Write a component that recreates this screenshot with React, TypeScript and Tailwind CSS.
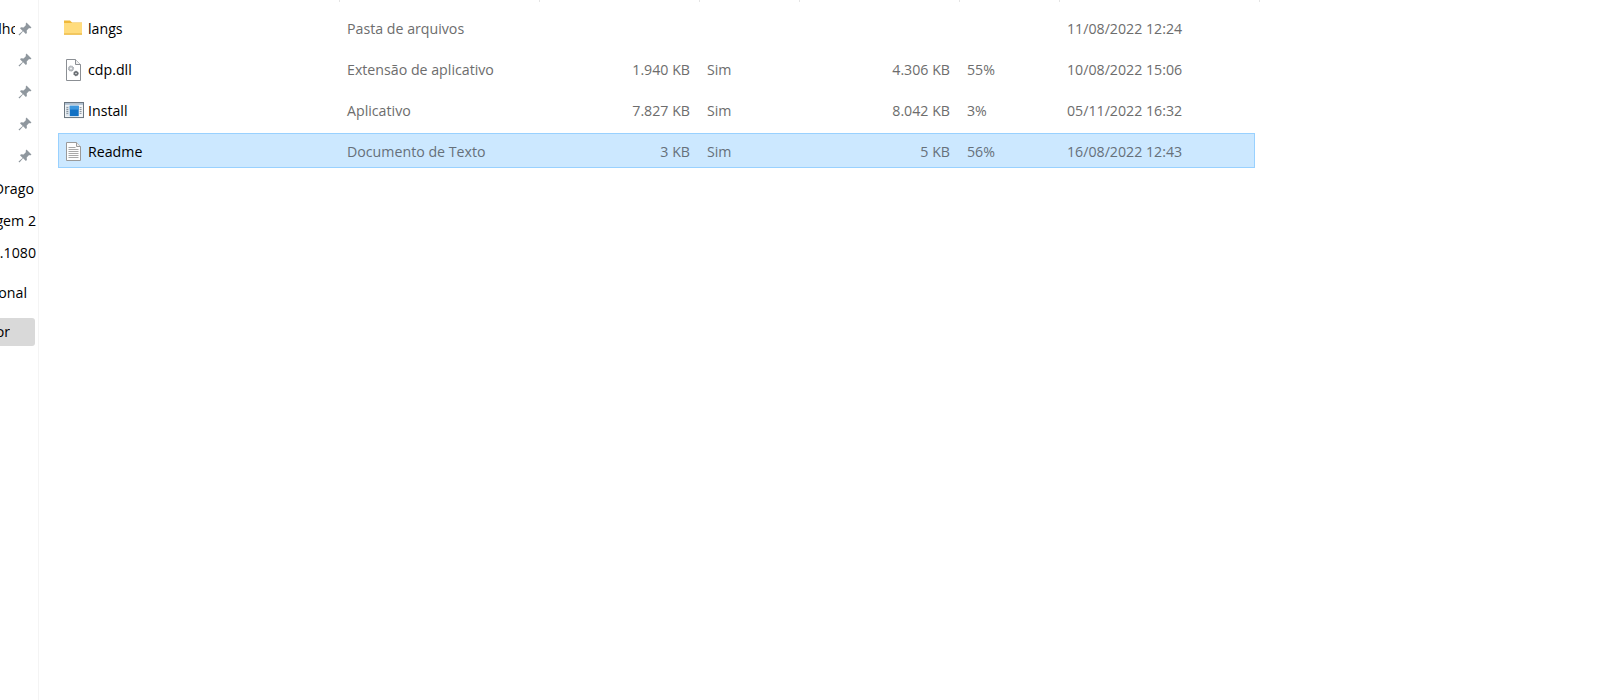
import React from 'react'

const gridCols = 'grid grid-cols-[282px_200px_160px_100px_160px_100px_200px]'

const files = [
  { name: 'langs', icon: 'folder', type: 'Pasta de arquivos', size: '', comp: '', packed: '', ratio: '', date: '11/08/2022 12:24' },
  { name: 'cdp.dll', icon: 'dll', type: 'Extensão de aplicativo', size: '1.940 KB', comp: 'Sim', packed: '4.306 KB', ratio: '55%', date: '10/08/2022 15:06' },
  { name: 'Install', icon: 'exe', type: 'Aplicativo', size: '7.827 KB', comp: 'Sim', packed: '8.042 KB', ratio: '3%', date: '05/11/2022 16:32' },
  { name: 'Readme', icon: 'txt', type: 'Documento de Texto', size: '3 KB', comp: 'Sim', packed: '5 KB', ratio: '56%', date: '16/08/2022 12:43' },
]

function FileIcon({ kind }: { kind: string }) {
  if (kind === 'folder') {
    return (
      <svg width="20" height="18" viewBox="1 1 20 18">
        <path d="M1 2.5h6l2 2h10v12H1z" fill="#f0b93a" />
        <rect x="1" y="5" width="18" height="11.5" fill="#ffdc7d" />
        <rect x="1" y="15.5" width="18" height="1" fill="#e8b23c" />
      </svg>
    )
  }
  if (kind === 'dll') {
    return (
      <svg width="20" height="24" viewBox="1 0 20 24">
        <path d="M3.5 1.5h9l5 5v16h-14z" fill="#fff" stroke="#8b8f94" />
        <path d="M12.5 1.5v5h5" fill="#f0f0f0" stroke="#8b8f94" />
        <circle cx="8" cy="10.5" r="2.6" fill="#b9bdc2" stroke="#9ba0a5" strokeDasharray="1 0.6" />
        <circle cx="8" cy="10.5" r="0.9" fill="#fff" />
        <circle cx="13" cy="15.5" r="2.2" fill="#6d7277" stroke="#555a5f" strokeDasharray="1 0.6" />
        <circle cx="13" cy="15.5" r="0.7" fill="#fff" />
      </svg>
    )
  }
  if (kind === 'exe') {
    return (
      <svg width="20" height="17" viewBox="0 0 21 18">
        <rect x="0.5" y="0.5" width="20" height="16" fill="#f4f6f8" stroke="#5f6b76" />
        <rect x="1" y="1" width="19" height="2" fill="#aebfd0" />
        <rect x="2" y="4" width="3" height="11" fill="#dbe3ea" />
        <path d="M2.5 6h2M2.5 8h2M2.5 10h2M2.5 12h2M16.5 6h2M16.5 8h2M16.5 10h2M16.5 12h2" stroke="#7c8894" />
        <rect x="6" y="4" width="9.5" height="11" fill="#1070c4" />
        <rect x="6" y="4" width="9.5" height="4" fill="#3d97de" />
      </svg>
    )
  }
  return (
    <svg width="17" height="21" viewBox="0 0 17 21">
      <path d="M1.5 1.5h10l4 4v14h-14z" fill="#fdfdfd" stroke="#9a9a9a" />
      <path d="M11.5 1.5v4h4" fill="#ececec" stroke="#9a9a9a" />
      <path d="M3.5 6.5h7M3.5 8.5h10M3.5 10.5h10M3.5 12.5h10M3.5 14.5h10M3.5 16.5h10" stroke="#a8a8a8" />
    </svg>
  )
}

function Pin() {
  return (
    <svg width="16" height="16" viewBox="0 0 16 16">
      <path d="M9.5 1.5l5 5-1.4 1-1-.4-2.4 2.4.2 2.6-1 1-2.8-2.8L2.5 14.5l-1-1 4.2-3.6L3 7.2l1-1 2.6.2L9 4l-.4-1z" fill="#8f979e" />
    </svg>
  )
}

function SideText({ text, width }: { text: string; width: string }) {
  return <div className={`flex justify-end overflow-hidden whitespace-nowrap ${width}`}>{text}</div>
}

export default function App() {
  return (
    <div className="flex h-[700px] w-[1600px] overflow-hidden bg-white text-[14.2px] font-['Open_Sans','Noto_Sans',sans-serif] text-black">
      {/* Nav pane, cut off by the crop */}
      <aside className="w-[39px] shrink-0 border-r border-[#f4f4f4] pt-[20px] leading-[20px]">
        <div className="flex h-[17px] items-center">
          <div className="w-[15px] overflow-hidden">
            <SideText text="Trabalho" width="w-[19px]" />
          </div>
          <div className="ml-[2px]"><Pin /></div>
        </div>
        <div className="mt-[15px] flex flex-col gap-[16px] pl-[17px]">
          <Pin />
          <Pin />
          <Pin />
          <Pin />
        </div>
        <div className="mt-[15px] flex flex-col">
          <SideText text="Drago" width="w-[34px] h-[32px]" />
          <SideText text="Imagem 2" width="w-[36px] h-[32px]" />
          <SideText text="1920.1080" width="w-[36px] h-[40px]" />
          <SideText text="Opcional" width="w-[27px] h-[25px]" />
        </div>
        <div className="mt-[10px] flex h-[28px] w-[35px] items-center rounded-r-[3px] bg-[#d9d9d9]">
          <SideText text="Instalador" width="w-[10px]" />
        </div>
      </aside>

      <main className="flex-1 pl-[19px]">
        {/* Column header edges, only the last pixels are visible */}
        <div className={`${gridCols} h-[2px]`}>
          {['a', 'b', 'c', 'd', 'e', 'f', 'g'].map((c) => (
            <div key={c} className="border-r border-[#e5e5e5]" />
          ))}
        </div>
        <div className="w-[1197px] pt-[6px]">
          {files.map((f, i) => (
            <div key={f.name} className="flex h-[41px] items-center">
              <div
                className={
                  i === 3
                    ? `${gridCols} mt-[-2px] h-[35px] w-full items-center border border-[#99d1ff] bg-[#cce8ff] pt-[2px] text-[#66707a]`
                    : `${gridCols} h-[35px] w-full items-center border border-transparent text-[#6d6d6d]`
                }
              >
                <div className="flex items-center text-black">
                  <div className="flex w-[29px] justify-center"><FileIcon kind={f.icon} /></div>
                  <span>{f.name}</span>
                </div>
                <div className="pl-[6px]">{f.type}</div>
                <div className="pr-[11px] text-right">{f.size}</div>
                <div className="pl-[6px]">{f.comp}</div>
                <div className="pr-[11px] text-right">{f.packed}</div>
                <div className="pl-[6px]">{f.ratio}</div>
                <div className="pl-[6px]">{f.date}</div>
              </div>
            </div>
          ))}
        </div>
      </main>
    </div>
  )
}
